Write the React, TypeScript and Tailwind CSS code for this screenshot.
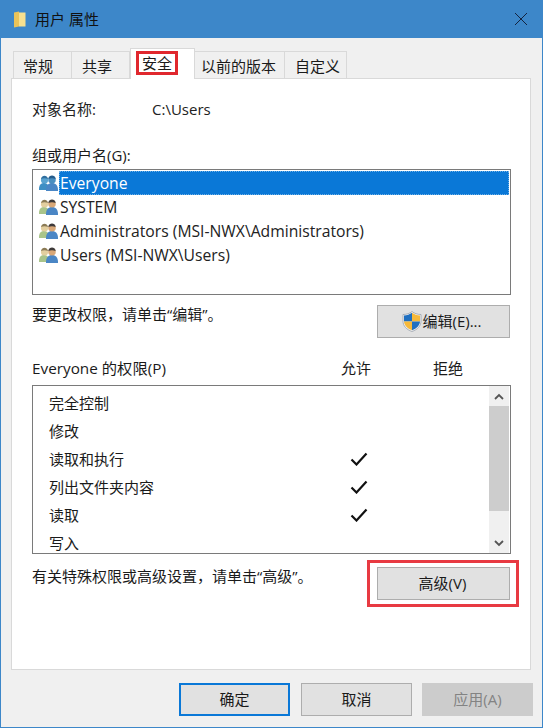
const FONT = "font-['Open_Sans','Noto_Sans_CJK_SC',sans-serif]";

function UsersIcon({ selected }: { selected?: boolean }) {
  const back = selected ? "#3f8fc4" : "#a9c48a";
  const head = selected ? "#5aa3d0" : "#e3cf9f";
  const hair = selected ? "#2f6f9f" : "#8a7a55";
  return (
    <svg width="19" height="17" viewBox="0 0 19 17" className="shrink-0">
      <path d="M0 14c0-4 2-6 5-6s5 2 5 6v1H0z" fill={back} />
      <circle cx="5.500" cy="5" r="3.600" fill={head} />
      <path d="M2 4c.5-2.500 2-3.300 3.500-3.300S8.500 1.500 9 4C7 3 4 3 2 4z" fill={hair} />
      <path d="M7 15c0-4.500 2.500-7 6-7s6 2.500 6 7v1H7z" fill="#4a86c5" />
      <circle cx="13" cy="4.800" r="3.800" fill={selected ? "#4b8fc0" : "#d9a878"} />
      <path d="M9.300 4c.5-2.600 2-3.500 3.700-3.500s3.200.9 3.700 3.500c-2.200-1-5.200-1-7.400 0z" fill={selected ? "#245c8c" : "#3d3a3a"} />
    </svg>
  );
}

function ShieldIcon() {
  return (
    <svg width="20" height="21" viewBox="0 0 20 21" className="shrink-0">
      <path d="M10 .5c2.500 2 5.500 3 9 3v6.500c0 5-3.500 8.500-9 10.500C4.500 18.500 1 15 1 10V3.500c3.500 0 6.500-1 9-3z" fill="#f4f4f4" stroke="#7f8a99" strokeWidth=".6" />
      <path d="M10 1.800c-2.300 1.700-5 2.500-8 2.700V10.500h8z" fill="#1f6fc0" />
      <path d="M10 1.800c2.300 1.700 5 2.500 8 2.700v6H10z" fill="#f6b93b" />
      <path d="M2 10.500c.4 4 3.200 6.900 8 8.800v-8.800z" fill="#f6b93b" />
      <path d="M18 10.500c-.4 4-3.200 6.900-8 8.800v-8.800z" fill="#1f6fc0" />
    </svg>
  );
}

function Check() {
  return (
    <svg width="18" height="14" viewBox="0 0 18 14">
      <path d="M1.500 7.500l5 5L16.500 1.500" fill="none" stroke="#111" strokeWidth="2.200" />
    </svg>
  );
}

function Chevron({ up }: { up?: boolean }) {
  return (
    <svg width="10" height="7" viewBox="0 0 10 7">
      <path d={up ? "M1 6l4-4 4 4" : "M1 1l4 4 4-4"} fill="none" stroke="#555" strokeWidth="1.800" />
    </svg>
  );
}

function Tab({ label, className, active }: { label: string; className: string; active?: boolean }) {
  if (active) {
    return (
      <div className={`${className} h-[31px] bg-white border-x border-t border-[#d9d9d9] -mb-px z-10 relative flex items-start pt-[2px]`}>
        <span className="border-[3px] border-[#e0282e] w-[42px] h-[24px] flex items-center justify-center text-[15px] text-[#1a1a1a]">{label}</span>
      </div>
    );
  }
  return (
    <div className={`${className} h-[27px] bg-[#f0f0f0] border-r border-t border-[#d9d9d9] first:border-l flex items-center pt-[2px] text-[15px] text-[#1a1a1a]`}>
      {label}
    </div>
  );
}

function Btn({ label, className, children }: { label: string; className: string; children?: React.ReactNode }) {
  return (
    <div className={`h-[33px] flex items-center justify-center text-[15px] ${className}`}>
      {children}
      {label}
    </div>
  );
}

const users = [
  { name: "Everyone", selected: true },
  { name: "SYSTEM" },
  { name: "Administrators (MSI-NWX\\Administrators)" },
  { name: "Users (MSI-NWX\\Users)" },
];

const perms = [
  { name: "完全控制" },
  { name: "修改" },
  { name: "读取和执行", allow: true },
  { name: "列出文件夹内容", allow: true },
  { name: "读取", allow: true },
  { name: "写入" },
];

export default function App() {
  return (
    <div className={`${FONT} w-[543px] h-[728px] flex flex-col bg-[#f0f0f0] border-x border-b border-[#3d87c9] text-[#1a1a1a] overflow-hidden`}>
      <div className="h-[38px] -mx-px shrink-0 bg-[#3d87c9] flex items-center pl-[13px] pr-[15px]">
        <svg width="13" height="17" viewBox="0 0 13 17" className="shrink-0">
          <path d="M6 1.500h6.500v14H6z" fill="#f7e08f" />
          <path d="M1 1.500L6 .5v15l-5 1z" fill="#e9c35a" />
        </svg>
        <span className="ml-[9px] text-[15px] text-[#111]">用户 属性</span>
        <svg width="14" height="14" viewBox="0 0 14 14" className="ml-auto">
          <path d="M1 1l12 12M13 1L1 13" stroke="#14233f" strokeWidth="1" />
        </svg>
      </div>

      <div className="flex-1 pl-[10px] pr-[11px] flex flex-col">
        <div className="flex h-[30px] mt-[10px] pl-[2px] shrink-0 items-end">
          <Tab label="常规" className="w-[59px] pl-[9px]" />
          <Tab label="共享" className="w-[58px] pl-[10px]" />
          <Tab label="安全" className="w-[65px] pl-[5px]" active />
          <Tab label="以前的版本" className="w-[90px] pl-[6px]" />
          <Tab label="自定义" className="w-[62px] pl-[10px]" />
        </div>

        <div className="h-[592px] bg-white border border-[#d9d9d9] pl-[20px] pr-[19px] flex flex-col shrink-0">
          <div className="flex items-center h-[20px] mt-[20px] text-[15px] text-[#222]">
            <span className="w-[120px]">对象名称:</span>
            <span>C:\Users</span>
          </div>

          <div className="h-[20px] mt-[26px] flex items-center text-[15px]">组或用户名(G):</div>

          <div className="h-[126px] mt-[4px] border border-[#7a7a7a] py-px pl-[6px] pr-px">
            {users.map((u) => (
              <div key={u.name} className="h-[24px] flex items-center">
                <UsersIcon selected={u.selected} />
                <span className={`ml-px h-[24px] flex-1 flex items-center pt-[2px] text-[15.7px] ${u.selected ? "bg-[#0a78d7] text-white border border-dotted border-[#6fb0e6]" : "pl-[1px] text-[#222]"}`}>
                  {u.name}
                </span>
              </div>
            ))}
          </div>

          <div className="flex items-center justify-between mt-[10px] h-[33px]">
            <span className="text-[15px] -mt-[15px]">{"要更改权限\uFF0C请单击“编辑”。"}</span>
            <Btn label="编辑(E)..." className="w-[133px] bg-[#e1e1e1] border border-[#adadad] mr-px pr-[3px]">
              <ShieldIcon />
            </Btn>
          </div>

          <div className="flex items-center h-[20px] mt-[20px] text-[15px]">
            <span className="w-[309px] text-[15.3px]">Everyone 的权限(P)</span>
            <span className="w-[92px]">允许</span>
            <span>拒绝</span>
          </div>

          <div className="h-[169px] mt-[7px] border border-[#7a7a7a] flex shrink-0">
            <div className="flex-1 pl-[16px] pt-[3px]">
              {perms.map((p) => (
                <div key={p.name} className="h-[28px] flex items-center text-[15px]">
                  <span className="w-[301px]">{p.name}</span>
                  {p.allow && <Check />}
                </div>
              ))}
            </div>
            <div className="w-[20px] mr-px flex flex-col bg-[#f0f0f0]">
              <div className="h-[20px] flex items-center justify-center"><Chevron up /></div>
              <div className="h-[105px] bg-[#cdcdcd]" />
              <div className="flex-1 flex items-center justify-center pt-[22px]"><Chevron /></div>
            </div>
          </div>

          <div className="flex justify-between mt-[6px]">
            <span className="text-[15px] h-[33px] flex items-center">{"有关特殊权限或高级设置\uFF0C请单击“高级”。"}</span>
            <div className="w-[152px] h-[47px] border-[3px] border-[#e83a42] -mr-[8px] flex items-center pl-[7px]">
              <Btn label="高级(V)" className="w-[133px] bg-[#e1e1e1] border border-[#adadad] shrink-0 pr-[2px]" />
            </div>
          </div>
        </div>

        <div className="flex justify-end mt-[13px] -mr-[2px]">
          <Btn label="确定" className="w-[111px] bg-[#e1e1e1] border-2 border-[#0a78d7]" />
          <Btn label="取消" className="w-[111px] ml-[11px] bg-[#e1e1e1] border border-[#adadad]" />
          <Btn label="应用(A)" className="w-[111px] ml-[10px] bg-[#cccccc] text-[#838383]" />
        </div>
      </div>
    </div>
  );
}
